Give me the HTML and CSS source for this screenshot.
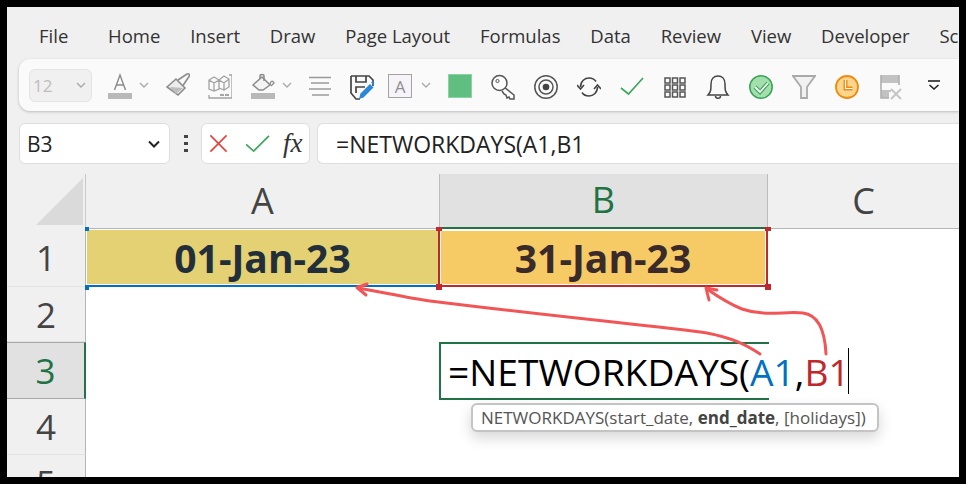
FILE: index.html
```html
<!DOCTYPE html>
<html lang="en">
<head>
<meta charset="utf-8">
<title>NETWORKDAYS</title>
<link rel="stylesheet" href="styles.css">
</head>
<body>
<div class="window">
  <nav class="menu">
    <span class="file">File</span><span>Home</span><span>Insert</span><span>Draw</span><span>Page Layout</span><span>Formulas</span><span>Data</span><span>Review</span><span>View</span><span>Developer</span><span>Script</span>
  </nav>

  <div class="toolbar">
    <div class="size"><span>12</span>
      <svg class="chev" viewBox="0 0 12 30"><path d="M2 13l4 4 4-4" /></svg>
    </div>
    <svg class="ico g16" viewBox="0 0 24 30"><path d="M6.500 20L12 5l5.500 15M8.500 15h7" fill="none" stroke="#8a8a8a" stroke-width="1.400"/><rect y="23" width="24" height="6" fill="#b9b9b9"/></svg>
    <svg class="chev g6" viewBox="0 0 12 30"><path d="M2 13l4 4 4-4"/></svg>
    <svg class="ico g16" viewBox="0 0 24 30"><path d="M1 17l9-8 9 9-7 7z" fill="#ececec" stroke="#8c8c8c" stroke-width="1.600"/><path d="M4 17l6 7 7-6z" fill="#bdbdbd"/><path d="M12 10l9-6c1.800-.8 3 .8 2 2.500l-6 9" fill="none" stroke="#8c8c8c" stroke-width="1.600"/></svg>
    <svg class="ico g18" viewBox="0 0 24 30"><g fill="none" stroke="#a3a3a3" stroke-width="1.300"><path d="M1 10l5-3 5 3v9l-5 2-5-2zM1 10l5 3 5-3M6 13v8M11 10l5-4 5 3v8l-5 3-5-2M11 10l5 3 5-4M16 13v7"/><path d="M1 25v3h23V5h-3"/></g><path d="M12 25h9" stroke="#888" stroke-width="1.300" stroke-dasharray="4 1"/></svg>
    <svg class="ico g19" viewBox="0 0 24 30"><path d="M2 15l9-8 8 8-7 5h-4z" fill="#f4f4f4" stroke="#8c8c8c" stroke-width="1.500"/><path d="M9 9V6c0-2 4-2 4 0v5" fill="none" stroke="#8c8c8c" stroke-width="1.500"/><path d="M19 15c0-4 3-5 4-2l-3 3" fill="none" stroke="#8c8c8c" stroke-width="1.300"/><rect y="23" width="24" height="6" fill="#b9b9b9"/></svg>
    <svg class="chev g6" viewBox="0 0 12 30"><path d="M2 13l4 4 4-4"/></svg>
    <svg class="ico g15" viewBox="0 0 24 30"><path d="M1 7.500h22M3 13h18M1 19h22M4 25h17" stroke="#9a9a9a" stroke-width="1.500"/></svg>
    <svg class="ico g18" viewBox="0 0 24 30"><path d="M1 6h18l4 4v6M1 6v17l5 6h4" fill="none" stroke="#444" stroke-width="1.700"/><path d="M6 6v6h10V6M6 23v-6h9" fill="none" stroke="#444" stroke-width="1.700"/><path d="M9 29l1.500-5.500L20 14l3.500 3.500-10 10z" fill="#2b88d8"/><path d="M21 12.500l1.500-1.500 3 3-1.500 1.500z" fill="#2b88d8"/></svg>
    <div class="abox g14">A</div>
    <svg class="chev g8" viewBox="0 0 12 30"><path d="M2 13l4 4 4-4"/></svg>
    <div class="swatch g16"></div>
    <svg class="ico g19" viewBox="0 0 24 30"><path d="M13 17l10 8v4h-4l-1-2-2 1-1-3-2-1-2-3" fill="#fff" stroke="#555" stroke-width="1.500"/><circle cx="8.500" cy="13" r="7.500" fill="#fff" stroke="#555" stroke-width="1.500"/><circle cx="6.500" cy="11" r="1.600" fill="none" stroke="#555"/></svg>
    <svg class="ico g19" viewBox="0 0 24 30"><g fill="none" stroke="#555" stroke-width="1.500"><circle cx="12" cy="17" r="11.200"/><circle cx="12" cy="17" r="7"/></g><circle cx="12" cy="17" r="3.300" fill="#444"/></svg>
    <svg class="ico g19" viewBox="0 0 24 30"><g fill="none" stroke="#444" stroke-width="1.600"><path d="M3.500 17C3.500 11 8 8 12 8c3 0 5.500 1.300 7 3.500"/><path d="M20.500 17c0 6-4.500 9-8.500 9-3 0-5.500-1.300-7-3.500"/><path d="M0 15l3.500 4 3.500-4M17 19l3.500-4 3.500 4"/></g></svg>
    <svg class="ico g19" viewBox="0 0 24 30"><path d="M1 18l7.500 6L23 8" fill="none" stroke="#3fa65f" stroke-width="1.700"/></svg>
    <svg class="ico g19" viewBox="0 0 24 30"><g fill="none" stroke="#555" stroke-width="1.500"><path d="M2 8h5v5H2zM9.500 8h5v5h-5zM17 8h5v5h-5zM2 15h5v5H2zM9.500 15h5v5h-5zM17 15h5v5h-5zM2 22h5v5H2zM9.500 22h5v5h-5zM17 22h5v5h-5z"/></g></svg>
    <svg class="ico g19" viewBox="0 0 24 30"><path d="M2 25c3-3 3-6 3-11 0-5 3-8 7-8s7 3 7 8c0 5 0 8 3 11z" fill="none" stroke="#444" stroke-width="1.500"/><path d="M9.500 26c0 3 5 3 5 0" fill="none" stroke="#444" stroke-width="1.500"/></svg>
    <svg class="ico g19" viewBox="0 0 24 30"><circle cx="12" cy="17" r="11.200" fill="#a2dfac" stroke="#36a454" stroke-width="1.500"/><path d="M6 17l5 5 8-9" fill="none" stroke="#36a454" stroke-width="4"/><path d="M6 17l5 5 8-9" fill="none" stroke="#fff" stroke-width="1.800"/></svg>
    <svg class="ico g19" viewBox="0 0 24 30"><path d="M1 6h22l-8 11v11H9V17z" fill="#f1f1f1" stroke="#aaa" stroke-width="1.800"/></svg>
    <svg class="ico g19" viewBox="0 0 24 30"><circle cx="12" cy="17" r="11" fill="#fdd68d" stroke="#f08a0e" stroke-width="1.800"/><path d="M10.500 10v8.500h7" fill="none" stroke="#f08a0e" stroke-width="4"/><path d="M10.500 10v8.500h7" fill="none" stroke="#fff" stroke-width="1.200"/></svg>
    <svg class="ico g20" viewBox="0 0 24 30"><path d="M2 5h18v6H2zM2 22h8v6H2z" fill="#c2c2c2"/><path d="M2 5v23h8M20 5v10M2 12h18M2 21h10" fill="none" stroke="#b0b0b0" stroke-width="1.600"/><path d="M12 19l10 10M22 19L12 29" stroke="#c4c4c4" stroke-width="1.800"/></svg>
    <svg class="ico drop" viewBox="0 0 24 30"><path d="M6 11h12" stroke="#222" stroke-width="1.600"/><path d="M7.500 15l4.500 4 4.500-4" fill="none" stroke="#222" stroke-width="1.600"/></svg>
  </div>

  <div class="fbar">
    <div class="namebox"><span>B3</span>
      <svg viewBox="0 0 14 10" class="namechev"><path d="M2 2.500l5 5 5-5"/></svg>
    </div>
    <div class="dots"><i></i><i></i><i></i></div>
    <div class="fxbox">
      <svg viewBox="0 0 20 20" class="fxi"><path d="M1.500 1.500l17 17M18.500 1.500l-17 17" stroke="#e8403a" stroke-width="1.700"/></svg>
      <svg viewBox="0 0 26 20" class="fxc"><path d="M1 11l8 7L25 2" fill="none" stroke="#3fa65f" stroke-width="1.800"/></svg>
      <span class="fx">fx</span>
    </div>
    <div class="input">=NETWORKDAYS(A1,B1</div>
  </div>

  <div class="sheet">
    <div class="corner"><div class="tri"></div></div>
    <div class="col">A</div>
    <div class="col active">B</div>
    <div class="col">C</div>

    <div class="row">1</div>
    <div class="cell date-a">01-Jan-23</div>
    <div class="cell date-b">31-Jan-23</div>
    <div class="cell"></div>

    <div class="row">2</div><div class="cell"></div><div class="cell"></div><div class="cell"></div>
    <div class="row active">3</div><div class="cell"></div><div class="cell"></div><div class="cell"></div>
    <div class="row">4</div><div class="cell"></div><div class="cell"></div><div class="cell"></div>
    <div class="row">5</div><div class="cell"></div><div class="cell"></div><div class="cell"></div>
  </div>

  <i class="h h1 blue"></i><i class="h h2 blue"></i><i class="h h3 red"></i><i class="h h4 red"></i><i class="h h5 red"></i><i class="h h6 red"></i><i class="h h7 green"></i>

  <div class="editor">=NETWORKDAYS(<span class="ref-a">A1</span>,<span class="ref-b">B1</span><i class="caret"></i></div>
  <div class="tip">NETWORKDAYS(start_date, <b>end_date</b>, [holidays])</div>

  <svg class="arrows" viewBox="0 0 952 470" width="952" height="470">
    <g fill="none" stroke="#f25555" stroke-width="3" stroke-linecap="round" stroke-linejoin="round">
      <path d="M753 347C738 337 725 331 700 326C650 319 560 311 423 294C400 291 375 285 351 281"/>
      <path d="M360 277L350 280.500L359 288"/>
      <path d="M819 347C818 325 812 308 796 306C778 304 758 310 735 302C720 296 710 289 700 282"/>
      <path d="M702 293L699 281L710 283"/>
    </g>
  </svg>
</div>
</body>
</html>
```
FILE: styles.css
```css
* { box-sizing: border-box; }
html, body { margin: 0; height: 100%; }
body { background: #000; overflow: hidden; font-family: "Open Sans", "Noto Sans", sans-serif; }

.window { position: relative; margin: 7px 0 0 7px; width: 952px; height: 470px; background: #f0f0f0; overflow: hidden; }

.menu { height: 52px; display: flex; align-items: center; gap: 29.800px; padding: 5px 0 0 32px; font-size: 18.500px; color: #333; white-space: nowrap; }
.menu .file { margin-right: 10px; }

.toolbar { height: 52px; margin-left: 12px; display: flex; align-items: center; padding-left: 10px; background: #fafafa; border-radius: 11px 0 0 11px; box-shadow: 0 1px 3px rgba(0,0,0,.22); }
.size { width: 63px; height: 33px; display: flex; align-items: center; justify-content: space-between; padding: 0 1px 0 3px; background: #f0f0f0; border: 1px solid #e3e3e3; border-radius: 6px; color: #bdbdbd; font-size: 17px; flex: none; }
.ico { width: 24px; height: 30px; flex: none; }
.chev { width: 12px; height: 30px; flex: none; }
.chev path { fill: none; stroke: #aaa; stroke-width: 1.4; }
.size .chev { margin-right: 3px; }
.g6 { margin-left: 6px; } .g8 { margin-left: 8px; } .g14 { margin-left: 14px; } .g15 { margin-left: 15px; }
.g16 { margin-left: 16px; } .g18 { margin-left: 18px; } .g19 { margin-left: 19px; } .g20 { margin-left: 20px; }
.drop { margin-left: 19px; }
.abox { width: 24px; height: 24px; flex: none; display: flex; align-items: center; justify-content: center; margin-top: 2px; background: #f6f4f8; border: 1px solid #a3a3a3; color: #8f8f8f; font-size: 17px; }
.swatch { width: 24px; height: 24px; flex: none; margin-top: 2px; background: #5fbf80; border: 1px solid #8bd3a3; }

.fbar { height: 41px; margin: 12px 0 10px 12px; display: flex; align-items: stretch; font-size: 23px; color: #222; }
.namebox { width: 151px; display: flex; align-items: center; justify-content: space-between; padding: 0 8px 0 7px; background: #fff; border: 1px solid #dedede; border-radius: 6px; font-size: 21px; }
.namechev { width: 14px; height: 10px; }
.namechev path { fill: none; stroke: #222; stroke-width: 2; }
.dots { width: 31px; display: flex; flex-direction: column; align-items: center; justify-content: center; gap: 4px; }
.dots i { width: 4px; height: 3px; background: #444; }
.fxbox { width: 109px; display: flex; align-items: center; padding-left: 7px; background: #fff; border: 1px solid #dedede; border-radius: 6px; }
.fxi { width: 19px; height: 19px; }
.fxc { width: 25px; height: 19px; margin-left: 17px; }
.fx { margin-left: 13px; font: italic 27px "Liberation Serif", serif; color: #333; }
.input { margin-left: 7px; flex: 1; display: flex; align-items: center; padding-left: 18px; background: #fff; border: 1px solid #dedede; border-right: 0; border-radius: 6px 0 0 6px; }

.sheet { display: grid; grid-template-columns: 79px 353px 329px 1fr; grid-template-rows: 55px 58px 55px 57px 56px 56px; background: #fff; height: 303px; overflow: hidden; }
.corner { position: relative; background: #f0f0f0; border-right: 1px solid #c8c8c8; }
.tri { position: absolute; left: 29px; top: 4px; width: 47px; height: 47px; background: #dadada; clip-path: polygon(100% 0, 100% 100%, 0 100%); }
.col { display: flex; align-items: center; justify-content: center; padding-bottom: 2px; background: #f0f0f0; border-bottom: 1px solid #b5b5b5; font-size: 36px; color: #444; }
.col.active { background: #e1e1e1; border-bottom: 2px solid #217346; border-left: 1px solid #bdbdbd; border-right: 1px solid #bdbdbd; color: #217346; }
.row { display: flex; align-items: center; justify-content: center; background: #f0f0f0; border-right: 1px solid #b5b5b5; border-bottom: 1px solid #e2e2e2; font-size: 35px; color: #444; }
.row.active { background: #e1e1e1; border-top: 1px solid #a8a8a8; border-bottom: 1px solid #a8a8a8; border-right: 2px solid #217346; color: #217346; }
.cell { display: flex; align-items: center; justify-content: center; background: #fff; font-size: 39px; font-weight: 700; }
.date-a { background: #e4d173; color: #222e3a; border-bottom: 2px solid #0070c0; box-shadow: inset 0 0 0 1px #fff; }
.date-b { background: #f6cb65; color: #3a2a2a; border: 2px solid #c0282d; border-top: 1px solid #fff; box-shadow: inset 0 0 0 1px #fff; margin-left: -1px; }

.h { position: absolute; width: 6px; height: 6px; }
.blue { background: #0070c0; } .red { background: #c0282d; } .green { background: #217346; }
.h1 { left: 78px; top: 220px; width: 4px; height: 4px; }
.h2 { left: 78px; top: 278px; width: 4px; height: 5px; }
.h3 { left: 429px; top: 220px; height: 4px; }
.h4 { left: 429px; top: 277px; }
.h5 { left: 758px; top: 220px; height: 4px; }
.h6 { left: 758px; top: 277px; }
.h7 { left: 756px; top: 389px; height: 4px; }

.editor { position: absolute; left: 432px; top: 335px; width: 330px; height: 58px; display: flex; align-items: center; padding-left: 7px; background: #fff; border: 2px solid #217346; border-right: 0; white-space: nowrap; font-size: 37.200px; color: #000; }
.ref-a { color: #0070c0; } .ref-b { color: #c0282d; }
.caret { flex: none; width: 1px; height: 46px; margin-left: -2px; background: #000; }
.tip { position: absolute; left: 464px; top: 396px; width: 408px; height: 29px; padding: 0 8px; display: flex; align-items: center; white-space: pre; background: #fff; border: 2px solid #c4c4c4; border-radius: 6px; box-shadow: 0 6px 14px rgba(0,0,0,.16); font-size: 17px; color: #555; }
.tip b { color: #444; }
.arrows { position: absolute; left: 0; top: 0; pointer-events: none; }
```
